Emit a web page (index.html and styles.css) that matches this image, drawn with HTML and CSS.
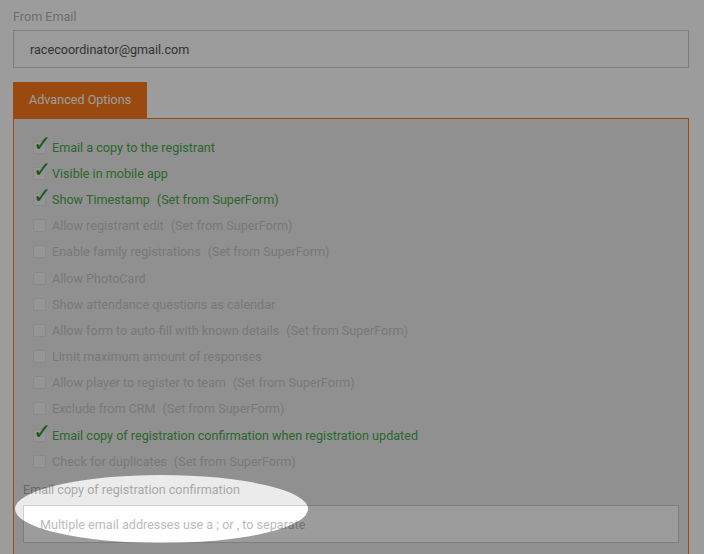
FILE: index.html
```html
<!DOCTYPE html>
<html lang="en">
<head>
    <meta charset="UTF-8">
    <title>Form Settings</title>
    <link rel="stylesheet" href="styles.css">
</head>
<body>
    <div id="settings">
        <div class="field-label">From Email</div>
        <div class="text-input">racecoordinator@gmail.com</div>

        <div class="tab">Advanced Options</div>
        <div class="panel">
            <ul class="options">
                <li class="option checked"><span class="box"></span>Email a copy to the registrant</li>
                <li class="option checked"><span class="box"></span>Visible in mobile app</li>
                <li class="option checked"><span class="box"></span>Show Timestamp<span class="note">(Set from SuperForm)</span></li>
                <li class="option"><span class="box"></span>Allow registrant edit<span class="note">(Set from SuperForm)</span></li>
                <li class="option"><span class="box"></span>Enable family registrations<span class="note">(Set from SuperForm)</span></li>
                <li class="option"><span class="box"></span>Allow PhotoCard</li>
                <li class="option"><span class="box"></span>Show attendance questions as calendar</li>
                <li class="option"><span class="box"></span>Allow form to auto-fill with known details<span class="note">(Set from SuperForm)</span></li>
                <li class="option"><span class="box"></span>Limit maximum amount of responses</li>
                <li class="option"><span class="box"></span>Allow player to register to team<span class="note">(Set from SuperForm)</span></li>
                <li class="option"><span class="box"></span>Exclude from CRM<span class="note">(Set from SuperForm)</span></li>
                <li class="option checked"><span class="box"></span>Email copy of registration confirmation when registration updated</li>
                <li class="option"><span class="box"></span>Check for duplicates<span class="note">(Set from SuperForm)</span></li>
            </ul>

            <div class="field-label inner">Email copy of registration confirmation</div>
            <div class="text-input placeholder">Multiple email addresses use a ; or , to separate</div>
        </div>
    </div>

    <!-- tour spotlight over the copy-email field -->
    <div class="spotlight"></div>
</body>
</html>
```

FILE: styles.css
```css
html {
    overflow: hidden;
}
body {
    margin: 0;
    font-family: Roboto, "Liberation Sans", sans-serif;
    font-size: 12.6px;
    background-color: #fff;
    position: relative;
    height: 554px;
    overflow: hidden;
}
#settings {
    padding: 9px 15px 0 13px;
}
.field-label {
    color: #b3b3b3;
    line-height: 16px;
    margin-bottom: 5px;
}
.text-input {
    height: 36px;
    border: 1px solid #cfcfcf;
    background-color: #fdfdfd;
    padding: 0 16px;
    display: flex;
    align-items: center;
    color: #555;
}
.text-input.placeholder {
    color: #bbb;
    background-color: #fff;
}
.tab {
    display: inline-block;
    margin-top: 14px;
    width: 134px;
    height: 36px;
    line-height: 36px;
    box-sizing: border-box;
    padding-left: 16px;
    background-color: #fc7a1c;
    color: #fff;
    vertical-align: top;
}
.panel {
    border: 1px solid #fc7a1c;
    background-color: #ebebeb;
    padding: 15px 9px 40px;
}
.options {
    list-style: none;
    margin: 0;
    padding: 0 0 0 10px;
}
.option {
    display: flex;
    align-items: center;
    height: 26.2px;
    color: #c6c6c6;
}
.option .box {
    position: relative;
    width: 11px;
    height: 11px;
    border: 1px solid #e2e2e2;
    border-radius: 2px;
    background-color: #f3f3f3;
    margin-right: 6px;
    flex-shrink: 0;
}
.option.checked {
    color: #4aa84a;
}
.option.checked .box::after {
    content: "\2713";
    position: absolute;
    left: -1px;
    top: -10px;
    font-family: "DejaVu Sans", sans-serif;
    font-size: 22px;
    line-height: 24px;
    color: #2a8c2a;
}
.note {
    margin-left: 7px;
}
.field-label.inner {
    margin-top: 8px;
    margin-bottom: 7px;
    color: #a8a8a8;
}
.spotlight {
    position: absolute;
    left: 15px;
    top: 475px;
    width: 293px;
    height: 68px;
    border-radius: 50%;
    box-shadow: 0 0 0 2000px rgba(0, 0, 0, 0.39);
}
```
